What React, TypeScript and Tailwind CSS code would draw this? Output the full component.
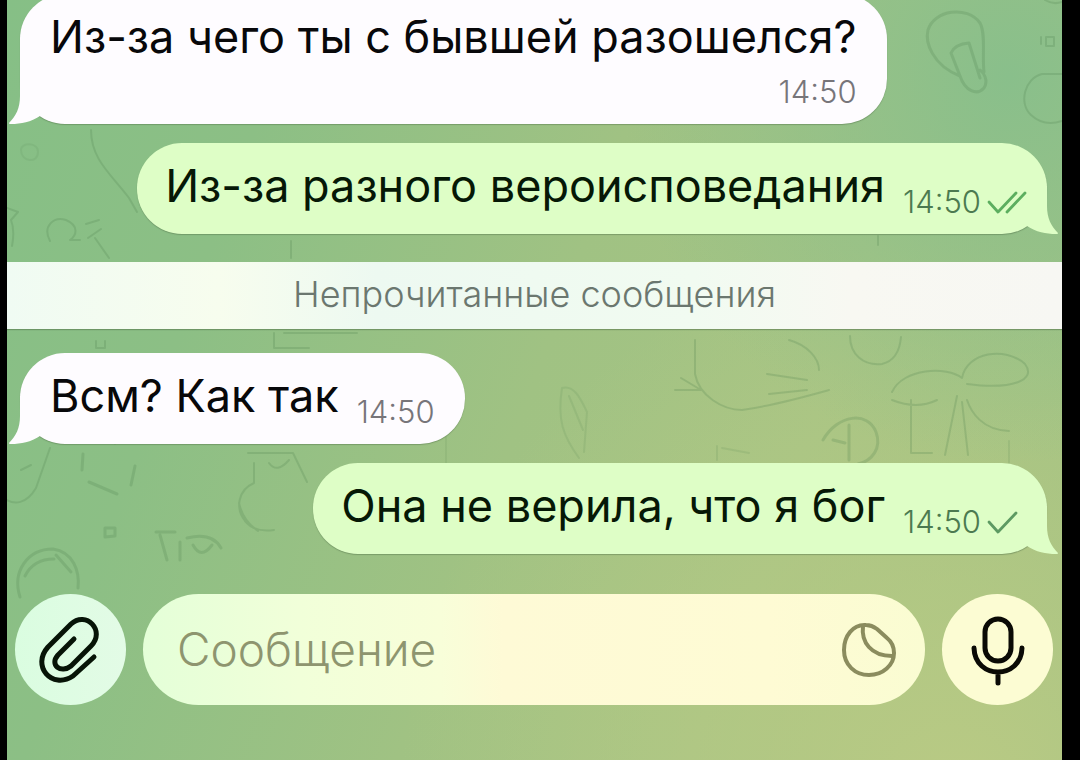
import clsx from 'clsx'

type Status = 'read' | 'sent'

interface Message {
  id: number
  text: string
  time: string
  own?: boolean
  status?: Status
  stacked?: boolean
}

const readMessages: Message[] = [
  { id: 1, text: 'Из-за чего ты с бывшей разошелся?', time: '14:50', stacked: true },
  { id: 2, text: 'Из-за разного вероисповедания', time: '14:50', own: true, status: 'read' },
]

const unreadMessages: Message[] = [
  { id: 3, text: 'Всм? Как так', time: '14:50' },
  { id: 4, text: 'Она не верила, что я бог', time: '14:50', own: true, status: 'sent' },
]

function Wallpaper() {
  return (
    <svg
      aria-hidden="true"
      viewBox="0 0 1055 760"
      preserveAspectRatio="xMidYMid slice"
      className="pointer-events-none absolute inset-0 h-full w-full"
      fill="none"
      stroke="#4d7f4d"
      strokeWidth="2"
      strokeLinecap="round"
      strokeLinejoin="round"
      opacity="0.22"
    >
      {/* light bulb */}
      <path d="M953 76 C925 65 918 42 921 30 C927 10 960 5 973 23 C979 34 975 55 977 72 M953 76 C958 91 970 96 977 88 C982 80 976 72 973 70 M953 76 L944 53 Q948 44 962 43 L973 78" strokeWidth="3" />
      <path d="M1055 74 H1035 C1018 78 1011 103 1024 115 Q1037 127 1055 121" />
      <path d="M1034 37 V44 M1039 37 H1047 V46 H1039 Z M1038 0 Q1046 5 1055 2" />
      {/* left edge */}
      <path d="M84 130 C84 160 105 175 122 198 L130 212" />
      <path d="M14 150 C14 142 31 142 31 152 C31 164 14 162 14 150" opacity="0.5" />
      <path d="M0 208 L11 212 L4 220 Q8 230 5 246" />
      <path d="M43 241 C35 226 47 216 59 220 C73 226 69 236 63 240 H73 M79 224 L92 220 M81 238 L94 229 M88 238 L102 258" />
      <path d="M89 341 V348 H98 V341" />
      <path d="M284 241 V258 M267 333 V348 H302 M277 333 H350 M871 236 V245" />
      {/* fish */}
      <path d="M688 340 V374 C692 396 716 410 735 410 C765 406 797 397 822 390 M760 374 L800 380 M762 394 L800 390 M782 340 C800 345 812 358 812 370 M674 378 L694 390 H668" />
      <path d="M843 336 C843 354 856 366 875 364 Q892 360 894 337" />
      {/* clover */}
      <path d="M885 392 C896 368 940 366 955 378 C960 352 998 346 1018 364 C1030 380 1006 390 960 384 M885 400 Q910 410 930 400 M960 400 C964 412 975 430 1002 431 M950 396 L938 455 M955 402 L961 455 M904 400 L904 453 H925" />
      <path d="M555 388 C568 384 575 402 580 412 L577 452 M555 388 C550 420 556 436 572 458 M562 396 L576 430" opacity="0.6" />
      <path d="M816 440 C831 414 861 411 869 432 C875 448 865 461 851 464 M842 425 V460 M826 440 L838 443" strokeWidth="3" />
      <path d="M710 446 V460 M715 448 L742 453 M1002 441 V463" opacity="0.6" />
      {/* lower left */}
      <path d="M43 448 L29 488 C19 505 7 504 0 500 M14 470 L24 465" />
      <path d="M76 454 L75 470 M82 482 L110 494 M124 485 L128 466" strokeWidth="3" />
      <path d="M98 528 H108 V536 L98 537 Z" strokeWidth="3" />
      <path d="M13 597 C5 572 20 549 46 549 C66 552 73 571 71 588 M18 576 C24 564 35 559 47 559 M49 555 L64 572" strokeWidth="3" />
      <path d="M149 532 H168 M153 535 L160 560 M173 542 V560 M180 538 Q205 532 214 548 M186 545 Q194 560 205 545" strokeWidth="3" />
      <path d="M241 453 H286 L300 482 M247 463 V483 C231 490 228 508 238 521 Q248 533 267 530 M232 503 Q236 521 251 531 M262 463 Q270 474 282 460" />
      <path d="M439 437 V463 M108 438 V444" opacity="0.5" />
    </svg>
  )
}

function Checks({ status }: { status: Status }) {
  return (
    <svg
      viewBox="0 0 40 26"
      className="ml-[6px] h-[26px] w-10"
      fill="none"
      strokeWidth="2.8"
      strokeLinecap="round"
      strokeLinejoin="round"
      role="img"
      aria-label={status === 'read' ? 'Прочитано' : 'Отправлено'}
    >
      <path d="M2 13 L11 23 L29 4" className={status === 'read' ? 'stroke-[#5cae5f]' : 'stroke-[#5d9a62]'} />
      {status === 'read' && <path d="M20 23 L38 4" className="stroke-[#5cae5f]" />}
    </svg>
  )
}

function Tail({ own }: { own?: boolean }) {
  return (
    <svg
      aria-hidden="true"
      viewBox="0 0 56 48"
      className={clsx(
        'absolute bottom-0 h-12 w-14',
        own ? '-right-[11px] -scale-x-100 fill-[#defec6]' : '-left-[11px] fill-[#fefcff]',
      )}
    >
      <path d="M11 0 V20 C11 32 7 40 0 47 C0 48 1 48 2 48 C12 48 22 46 31 40 L56 30 L40 0 Z" />
    </svg>
  )
}

function Bubble({ message }: { message: Message }) {
  const { text, time, own, status, stacked } = message

  return (
    <div
      className={clsx(
        'relative flex rounded-[45px] pt-[15px] pb-4 shadow-[0_1px_1px_rgba(80,110,70,0.45)]',
        own ? 'self-end bg-[#defec6] pr-5 pl-7' : 'self-start bg-[#fefcff] px-[30px]',
        stacked ? 'flex-col' : 'items-end gap-[18px]',
      )}
    >
      <Tail own={own} />
      <p className={clsx('relative mb-1 text-[45px] leading-[56px] whitespace-nowrap', own ? 'text-[#061806]' : 'text-[#08080a]')}>
        {text}
      </p>
      <div className={clsx('relative flex items-center', stacked && 'mt-[7px] self-end')}>
        <time className={clsx('text-[31px] leading-8 font-light', own ? 'text-[#4c7a50]' : 'text-[#77757a]')}>{time}</time>
        {status && <Checks status={status} />}
      </div>
    </div>
  )
}

export default function App() {
  return (
    <div className="min-h-screen overflow-hidden bg-black pr-[18px] pl-[7px] font-[Inter,'Liberation_Sans',sans-serif]">
      <div className="relative min-h-screen overflow-hidden bg-[linear-gradient(110deg,#86bf86_0%,#8cbf85_22%,#a0c283_50%,#a6c484_72%,#9fc183_100%)]">
        <div className="absolute inset-0 bg-[radial-gradient(circle_at_95%_10%,#89bf8b_0%,transparent_32%),radial-gradient(circle_at_90%_105%,#b9ca84_0%,transparent_45%)]" />
        <Wallpaper />

        <main className="relative -mt-[6px] flex flex-col">
          <section className="flex flex-col gap-[19px] pr-[15px] pl-[13px]">
            {readMessages.map((message) => (
              <Bubble key={message.id} message={message} />
            ))}
          </section>

          <h2 className="mt-7 mb-6 bg-[linear-gradient(90deg,#f0fbf3_0%,#f7fdee_20%,#edf9f1_35%,#f1fbf1_65%,#f8f8f2_80%,#f7f7f3_100%)] pb-[2px] text-center text-[36px] leading-[65px] font-light text-[#6b776f] shadow-[0_1px_1px_rgba(80,110,70,0.5)]">
            Непрочитанные сообщения
          </h2>

          <section className="flex flex-col gap-[19px] pr-[15px] pl-[13px]">
            {unreadMessages.map((message) => (
              <Bubble key={message.id} message={message} />
            ))}
          </section>

          <form className="mt-10 flex gap-[17px] pr-[9px] pl-2" onSubmit={(e) => e.preventDefault()}>
            <button
              type="button"
              aria-label="Прикрепить файл"
              className="flex size-[111px] shrink-0 items-center justify-center rounded-full bg-[linear-gradient(90deg,#dafde0,#e3fbe6)]"
            >
              <svg viewBox="0 0 111 111" className="size-full" fill="none" stroke="#071407" strokeWidth="5" strokeLinecap="round" strokeLinejoin="round">
                <path d="M59 45 L43 61 C34 71 46 80 56 72 L76 52 C91 37 71 16 56 30 L33 53 C16 72 37 96 58 82 L79 63" />
              </svg>
            </button>

            <div className="flex min-w-0 flex-1 items-center rounded-full bg-[linear-gradient(90deg,#e4ffd8_0%,#f1ffd9_20%,#f8fed9_38%,#fefad6_46%,#fefbd4_80%,#fafcd2_100%)] pr-[28px] pl-[34px]">
              <input
                type="text"
                aria-label="Сообщение"
                placeholder="Сообщение"
                className="h-14 min-w-0 flex-1 bg-transparent text-[46px] font-light text-[#071407] outline-none placeholder:text-[#8e956f]"
              />
              <button type="button" aria-label="Стикеры" className="shrink-0">
                <svg viewBox="0 0 56 56" className="size-14" fill="none" stroke="#8b8c5e" strokeWidth="4" strokeLinecap="round" strokeLinejoin="round">
                  <path d="M25 3 C12 2 3 14 3 28 C3 43 14 53 28 53 C42 53 53 43 53 31 C53 24 51 20 46 16 L36 7 C32 4 29 3 25 3 Z" />
                  <path d="M22 4 C20 20 30 34 51 34" />
                </svg>
              </button>
            </div>

            <button
              type="button"
              aria-label="Записать голосовое сообщение"
              className="flex size-[111px] shrink-0 items-center justify-center rounded-full bg-[#fcfcd3]"
            >
              <svg viewBox="0 0 111 111" className="size-full" fill="none" stroke="#0a0a05" strokeWidth="5" strokeLinecap="round">
                <rect x="43" y="25" width="26" height="42" rx="13" />
                <path d="M32 54 C33 86 79 86 80 54 M56 79 V89" />
              </svg>
            </button>
          </form>
        </main>
      </div>
    </div>
  )
}
